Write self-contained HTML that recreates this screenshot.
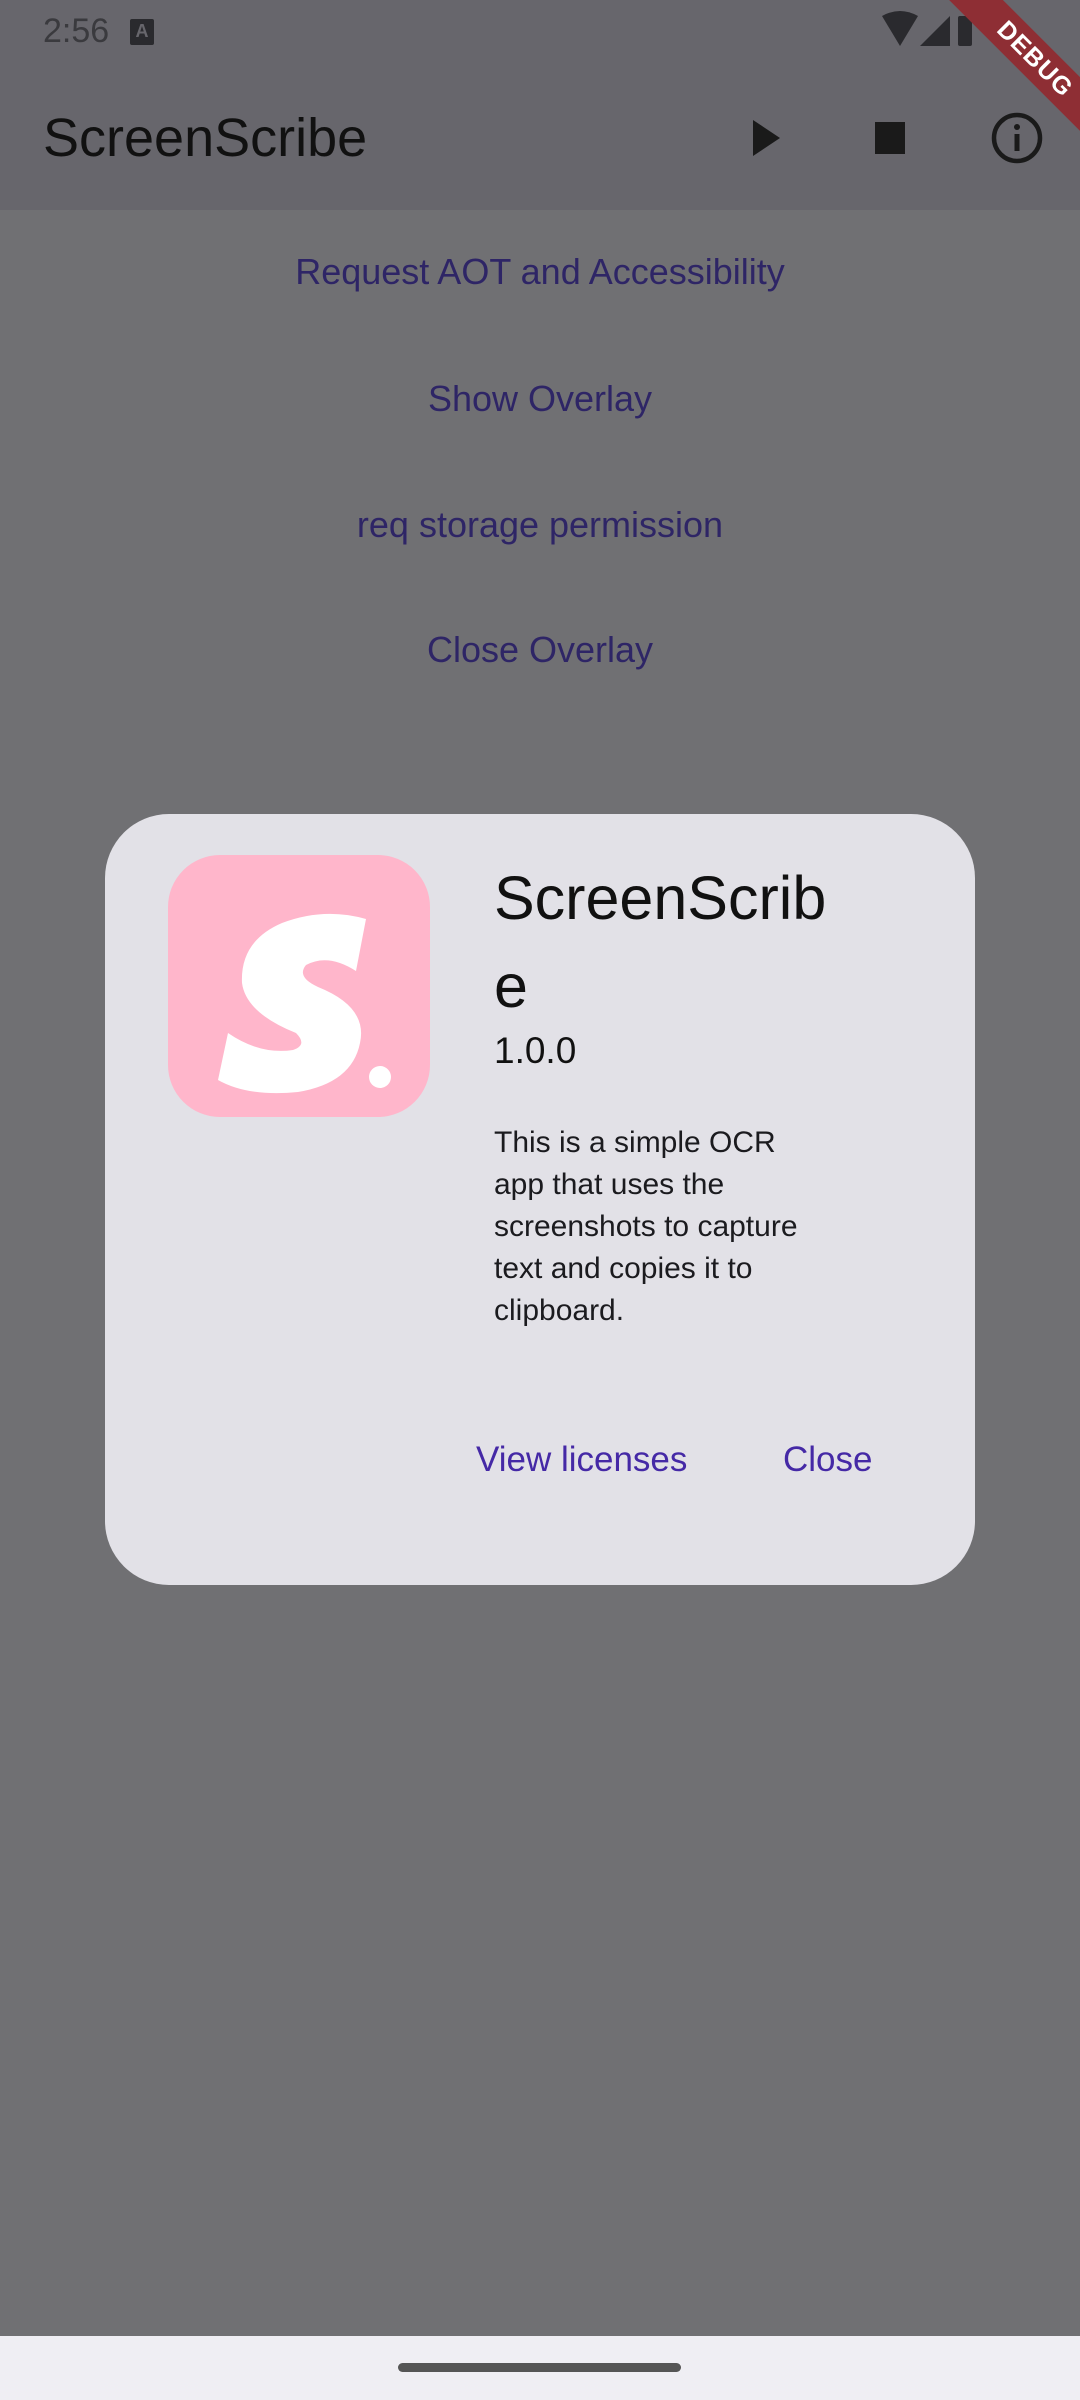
<!DOCTYPE html>
<html><head><meta charset="utf-8"><style>
*{margin:0;padding:0;box-sizing:border-box}
body{width:1080px;height:2400px;position:relative;overflow:hidden;background:#707073;font-family:"Liberation Sans",sans-serif}
.top{position:absolute;left:0;top:0;width:1080px;height:210px;background:#67666c}
.abs{position:absolute}
.btn{position:absolute;left:0;width:1080px;text-align:center;color:#2e2566;font-size:36px;line-height:40px}
.dlg{position:absolute;left:105px;top:814px;width:870px;height:771px;background:#e2e1e7;border-radius:64px}
.desc{position:absolute;left:389px;top:308px;font-size:30px;line-height:42px;color:#1b1b1f;white-space:nowrap}
</style></head><body>
<div class="top"></div>
<div class="abs" style="left:43px;top:12px;font-size:34px;color:#3a3a3e">2:56</div>
<div class="abs" style="left:130px;top:19px;width:24px;height:26px;background:#2a2a2e;border-radius:2px;color:#67666c;font-size:18px;font-weight:bold;text-align:center;line-height:24px">A</div>
<svg class="abs" style="left:880px;top:10px" width="140" height="40" viewBox="0 0 140 40">
<path d="M2 6 Q20 -4 38 6 L20 36 Z" fill="#2a2a2e"/>
<path d="M70 6 L70 36 L40 36 Z" fill="#2a2a2e"/>
<rect x="78" y="6" width="14" height="30" rx="2" fill="#2a2a2e"/>
</svg>
<div class="abs" style="left:43px;top:106px;font-size:54px;color:#111;line-height:64px">ScreenScribe</div>
<svg class="abs" style="left:750px;top:118px" width="36" height="40"><path d="M3 2 L30 20 L3 38 Z" fill="#1a1a1a"/></svg>
<div class="abs" style="left:875px;top:122px;width:30px;height:32px;background:#1a1a1a"></div>
<svg class="abs" style="left:990px;top:110px" width="54" height="56" viewBox="0 0 54 56"><circle cx="27" cy="28" r="23" fill="none" stroke="#1a1a1a" stroke-width="4.5"/><rect x="24.5" y="24" width="5" height="17" fill="#1a1a1a"/><circle cx="27" cy="17" r="3" fill="#1a1a1a"/></svg>
<div class="abs" style="left:885px;top:40px;width:300px;height:38px;background:#8e2e34;transform:rotate(45deg);transform-origin:center;color:#fff;font-weight:bold;font-size:25px;text-align:center;line-height:38px;letter-spacing:1px">DEBUG</div>
<div class="btn" style="top:252px">Request AOT and Accessibility</div>
<div class="btn" style="top:379px">Show Overlay</div>
<div class="btn" style="top:505px">req storage permission</div>
<div class="btn" style="top:630px">Close Overlay</div>
<div class="dlg">
<div class="abs" style="left:63px;top:41px;width:262px;height:262px;background:#ffb6cb;border-radius:52px;overflow:hidden">
<svg width="262" height="262" viewBox="0 0 262 262"><path d="M198 64 L188 116 Q160 98 138 110 Q128 122 150 132 Q200 152 192 188 Q184 228 130 237 Q80 242 50 225 L60 178 Q92 200 125 195 Q140 190 128 178 Q78 158 74 128 Q72 86 114 68 Q156 52 198 64 Z" fill="#fff"/><circle cx="212" cy="222" r="11" fill="#fff"/></svg>
</div>
<div class="abs" style="left:389px;top:40px;font-size:61px;line-height:88px;color:#111">ScreenScrib<br>e</div>
<div class="abs" style="left:389px;top:215px;font-size:37px;line-height:44px;color:#111">1.0.0</div>
<div class="desc">This is a simple OCR<br>app that uses the<br>screenshots to capture<br>text and copies it to<br>clipboard.</div>
<div class="abs" style="left:371px;top:626px;font-size:35px;color:#4529a6">View licenses</div>
<div class="abs" style="left:678px;top:626px;font-size:35px;color:#4529a6">Close</div>
</div>
<div class="abs" style="left:0;top:2336px;width:1080px;height:64px;background:#efeef3"></div>
<div class="abs" style="left:398px;top:2363px;width:283px;height:9px;background:#555;border-radius:5px"></div>
</body></html>
